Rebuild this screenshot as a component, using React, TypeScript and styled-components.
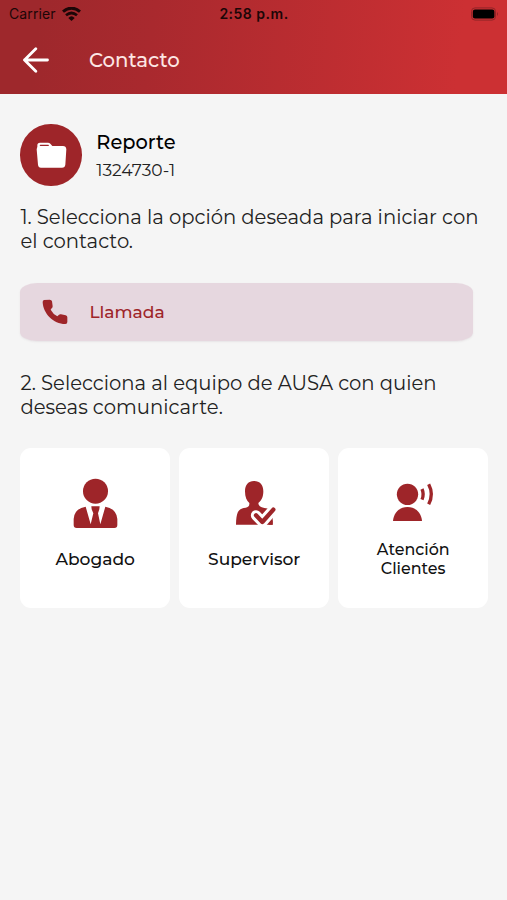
import React from "react";
import styled, { createGlobalStyle } from "styled-components";

const RED = "#9e2529";

const GlobalStyle = createGlobalStyle`
  *, *::before, *::after { box-sizing: border-box; }
  body {
    margin: 0;
    background: #f5f5f5;
    font-family: Montserrat, Inter, "Liberation Sans", sans-serif;
    color: #111;
  }
  svg { display: block; flex: none; }
`;

const Screen = styled.div`
  width: 507px;
  height: 900px;
  overflow: hidden;
  background: #f5f5f5;
`;

const Header = styled.header`
  height: 94px;
  background: linear-gradient(97deg, #9e282c 8%, #a9292e 30%, #cc3033 90%);
`;

const StatusBar = styled.div`
  display: grid;
  grid-template-columns: 1fr auto 1fr;
  align-items: center;
  height: 28px;
  padding: 0 8px 0 9px;
  font-family: Inter, "Liberation Sans", sans-serif;
  font-size: 14px;
  line-height: 28px;
  color: #1c0607;
`;

const Carrier = styled.div`
  display: flex;
  align-items: center;
  gap: 6px;
  letter-spacing: 0.1px;
`;

const Clock = styled.div`
  font-weight: 600;
  letter-spacing: 0.5px;
`;

const Battery = styled.div`
  display: flex;
  justify-content: flex-end;
`;

const NavBar = styled.div`
  display: flex;
  align-items: center;
  gap: 40px;
  height: 63px;
  padding-left: 22px;
`;

const Title = styled.h1`
  margin: 0;
  font-size: 19.7px;
  line-height: 24px;
  font-weight: 500;
  color: #fde6e4;
`;

const Content = styled.main`
  padding: 30px 19px 0 20.4px;
`;

const Report = styled.section`
  display: flex;
  align-items: center;
  gap: 14.4px;
  height: 62px;
`;

const Badge = styled.div`
  display: flex;
  align-items: center;
  justify-content: center;
  width: 61.5px;
  height: 61.5px;
  border-radius: 50%;
  background: ${RED};
`;

const ReportName = styled.div`
  font-size: 19.4px;
  line-height: 28px;
  font-weight: 500;
  color: #000;
`;

const ReportNumber = styled.div`
  font-size: 17.1px;
  line-height: 27px;
  color: #222;
`;

const Instruction = styled.p<{ $top: number }>`
  height: 48px;
  margin: ${(p) => p.$top}px 0 0;
  font-size: 19.6px;
  line-height: 23.8px;
  white-space: nowrap;
  color: #222;
`;

const CallButton = styled.button`
  display: flex;
  align-items: center;
  gap: 21px;
  width: 453px;
  height: 58px;
  margin-top: 28.5px;
  padding: 0 0 0 22px;
  border: 0;
  border-radius: 17px / 9px;
  background: #e6d7df;
  box-shadow: 0 1px 2px rgba(120, 90, 105, 0.1);
  font: inherit;
  font-size: 17.1px;
  line-height: 22px;
  font-weight: 500;
  color: ${RED};
`;

const Teams = styled.div`
  display: grid;
  grid-template-columns: repeat(3, 1fr);
  gap: 9.5px;
  margin-top: 28px;
`;

const Card = styled.button`
  display: flex;
  flex-direction: column;
  align-items: center;
  height: 160px;
  padding: 17px 0 0;
  border: 0;
  border-radius: 11px;
  background: #fff;
  font: inherit;
  color: #111;
`;

const CardLabel = styled.span<{ $small?: boolean }>`
  display: flex;
  align-items: center;
  height: ${(p) => (p.$small ? 38 : 36)}px;
  font-size: ${(p) => (p.$small ? 15.9 : 17.1)}px;
  line-height: 19px;
  font-weight: 500;
  text-align: center;
  white-space: nowrap;
`;

const WifiIcon = () => (
  <svg width="19" height="14" viewBox="0 0 57 42" fill="none" stroke="#1c0607">
    <path d="M3 14 Q28.500 -7 54 14" strokeWidth="9" />
    <path d="M12 25 Q28.500 11 45 25" strokeWidth="8" />
    <path d="M19 33 Q28.500 23 38 33 L28.500 42Z" fill="#1c0607" stroke="none" />
  </svg>
);

const BatteryIcon = () => (
  <svg width="28" height="14" viewBox="0 0 28 14">
    <rect x="0.500" y="0.900" width="24" height="12.200" rx="3.500" fill="none" stroke="#922528" />
    <rect x="1.800" y="2.500" width="21.600" height="9" rx="2.200" fill="#000" />
    <path d="M26 5 Q28 7 26 9Z" fill="#922528" />
  </svg>
);

const BackIcon = () => (
  <svg width="27" height="26" viewBox="0 0 27 26" fill="none" stroke="#fff" strokeWidth="2.800" strokeLinecap="round" strokeLinejoin="round">
    <path d="M25.500 13H2.500M13.800 1.800L2.500 13L13.800 24.200" />
  </svg>
);

const FolderIcon = () => (
  <svg width="31" height="27" viewBox="0 0 93 81" fill="#fff">
    <path d="M4 14V10Q4 2 12 2H36Q40 2 43 5L49 12H81Q90 12 91 22L88 68Q87 77 78 77H15Q7 77 6 68L2 22Z" />
    <path d="M13 10H37" stroke={RED} strokeWidth="3.500" strokeLinecap="round" />
  </svg>
);

const PhoneIcon = () => (
  <svg width="26" height="26" viewBox="0 0 78 78" fill={RED}>
    <path d="M6 3L23 2Q29 2 30 7L32 22Q32 26 29 28L26 32Q33 45 46 52L51 47Q53 45 57 46L71 49Q76 50 76 55V69Q76 75 70 75C34 75 3 43 2 9Q2 4 6 3Z" />
  </svg>
);

const LawyerIcon = () => (
  <svg width="70" height="75" viewBox="0 0 210 225" fill={RED}>
    <circle cx="106.500" cy="78.500" r="37.500" />
    <path d="M77 125Q42 132 41 162V180Q41 189 50 189H163Q172 189 172 180V162Q170 132 136 125L121 178L114 145L118 133L119 124H94L95 133L100 145L92 178Z" />
  </svg>
);

const SupervisorIcon = () => (
  <svg width="70" height="75" viewBox="-3 0 210 225" fill={RED}>
    <path d="M102 48C85 48 75 60 75 79C75 96 80 108 88 114C89 124 84 126 77 128C55 131 49 139 48 179H158V146Q151 130 133 129Q115 126 115 114C124 108 130 96 130 79C130 60 120 48 102 48Z" />
    <path d="M108 151L127 171L160 134" fill="none" stroke="#fff" strokeWidth="31" strokeLinecap="round" strokeLinejoin="round" />
    <path d="M108 151L127 171L160 134" fill="none" stroke={RED} strokeWidth="13" strokeLinecap="round" strokeLinejoin="round" />
    <path d="M145 179L158 165V179Z" />
  </svg>
);

const SupportIcon = () => (
  <svg width="70" height="75" viewBox="0 0 210 225" fill={RED}>
    <circle cx="88.500" cy="88" r="32" />
    <path d="M45 168C47 144 63 126 88.500 126C114 126 130 144 132 168Z" />
    <g fill="none" stroke={RED} strokeWidth="10">
      <path d="M132 72Q139 88 132 104" />
      <path d="M152 58Q168 88 152 118" />
    </g>
  </svg>
);

export default function App() {
  return (
    <Screen>
      <GlobalStyle />
      <Header>
        <StatusBar>
          <Carrier>
            <span>Carrier</span>
            <WifiIcon />
          </Carrier>
          <Clock>2:58 p.m.</Clock>
          <Battery>
            <BatteryIcon />
          </Battery>
        </StatusBar>
        <NavBar>
          <BackIcon />
          <Title>Contacto</Title>
        </NavBar>
      </Header>
      <Content>
        <Report>
          <Badge>
            <FolderIcon />
          </Badge>
          <div>
            <ReportName>Reporte</ReportName>
            <ReportNumber>1324730-1</ReportNumber>
          </div>
        </Report>
        <Instruction $top={20}>
          1. Selecciona la opción deseada para iniciar con
          <br />
          el contacto.
        </Instruction>
        <CallButton>
          <PhoneIcon />
          <span>Llamada</span>
        </CallButton>
        <Instruction $top={31.5}>
          2. Selecciona al equipo de AUSA con quien
          <br />
          deseas comunicarte.
        </Instruction>
        <Teams>
          <Card>
            <LawyerIcon />
            <CardLabel>Abogado</CardLabel>
          </Card>
          <Card>
            <SupervisorIcon />
            <CardLabel>Supervisor</CardLabel>
          </Card>
          <Card>
            <SupportIcon />
            <CardLabel $small>
              Atención
              <br />
              Clientes
            </CardLabel>
          </Card>
        </Teams>
      </Content>
    </Screen>
  );
}
